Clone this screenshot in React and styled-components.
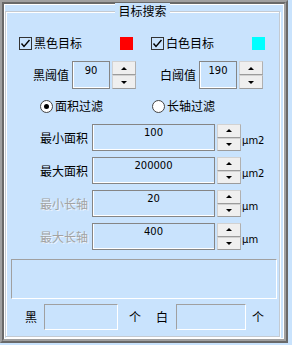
import React from 'react';
import styled, { createGlobalStyle } from 'styled-components';

const BG = '#c9e3fd';

const GlobalStyle = createGlobalStyle`
  body {
    margin: 0;
    background: ${BG};
    font-family: "Noto Sans CJK SC", "Noto Sans", sans-serif;
    font-size: 12px;
    color: #000;
  }
`;

const Frame = styled.div`
  box-sizing: border-box;
  width: 288px;
  height: 343px;
  border: 2px solid;
  border-color: #a0a0a0 #696969 #696969 #a0a0a0;
`;

const FrameInner = styled.div`
  box-sizing: border-box;
  height: 100%;
  display: flex;
  border: 2px solid;
  border-color: #696969 #a0a0a0 #a0a0a0 #696969;
  box-shadow: inset 1px 1px 0 #fff, inset -1px -1px 0 #fff;
  padding: 1px 4px 2px 1px;
`;

const Group = styled.fieldset`
  flex: 1;
  min-width: 0;
  margin: -2px 0 0 0;
  padding: 0;
  border: 1px solid #c4cad1;
  box-shadow: inset 1px 1px 0 #fff, 1px 1px 0 #fff;
  display: flex;
  flex-direction: column;
`;

const Title = styled.legend`
  margin: 0 auto;
  padding: 0 3px;
  font-size: 12px;
  line-height: 16px;
  background: ${BG};
`;

const PairRow = styled.div`
  display: grid;
  grid-template-columns: ${p => p.$col}px ${p => p.$col}px;
  column-gap: ${p => p.$gap}px;
  margin: ${p => p.$top}px 0 0 ${p => p.$left}px;
  height: 14px;
  align-items: center;
`;

const Option = styled.label`
  display: flex;
  align-items: center;
  gap: 2px;
  line-height: 14px;
  white-space: nowrap;
`;

const CheckBox = styled.span`
  box-sizing: border-box;
  width: 13px;
  height: 13px;
  border: 1px solid #333;
  display: flex;
  align-items: center;
  justify-content: center;
`;

const Radio = styled.span`
  box-sizing: border-box;
  width: 13px;
  height: 13px;
  border-radius: 50%;
  border: 1px solid #444;
  background: #fff;
  display: flex;
  align-items: center;
  justify-content: center;

  &::after {
    content: '';
    width: 5px;
    height: 5px;
    border-radius: 50%;
    background: ${p => (p.$on ? '#000' : 'transparent')};
  }
`;

const Swatch = styled.span`
  width: 13px;
  height: 13px;
  margin-left: auto;
  background: ${p => p.$color};
`;

const ThresholdRow = styled.div`
  display: flex;
  align-items: center;
  height: 28px;
  margin: 11px 0 0 27px;
`;

const FieldLabel = styled.span`
  line-height: 16px;
  white-space: nowrap;
  margin-left: ${p => p.$ml || 0}px;
  color: ${p => (p.$disabled ? '#a3a3a3' : '#000')};
  text-shadow: ${p => (p.$disabled ? '1px 1px 0 #eef5fd' : 'none')};
`;

const Value = styled.div`
  box-sizing: border-box;
  width: ${p => p.$w}px;
  height: 100%;
  margin-left: ${p => p.$ml}px;
  border: 1px solid #858585;
  box-shadow: inset 1px -1px 0 #fff;
  padding-top: ${p => p.$pt}px;
  font-family: "DejaVu Sans", sans-serif;
  font-size: 10px;
  line-height: 12px;
  text-align: center;
`;

const Spin = styled.div`
  display: flex;
  flex-direction: column;
  width: 24px;
  height: 100%;
  margin-left: 2px;
`;

const SpinButton = styled.div`
  box-sizing: border-box;
  flex: 1;
  display: flex;
  align-items: center;
  justify-content: center;
  background: #efefef;
  border: 1px solid;
  border-color: #d2d2d2 #b0b0b0 #9c9c9c #d2d2d2;

  &::after {
    content: '';
    border-left: 3px solid transparent;
    border-right: 3px solid transparent;
    ${p => (p.$down ? 'border-top' : 'border-bottom')}: 3px solid #000;
  }
`;

const RangeList = styled.div`
  display: flex;
  flex-direction: column;
  gap: 6px;
  margin: 11px 0 0 34px;
`;

const RangeRow = styled.div`
  display: flex;
  align-items: center;
  height: 27px;
`;

const Unit = styled.span`
  margin-left: 1px;
  padding-top: 6px;
  font-family: "DejaVu Sans", sans-serif;
  font-size: 10px;
  line-height: 12px;
`;

const Log = styled.div`
  box-sizing: border-box;
  width: 266px;
  height: 40px;
  margin: 9px 0 0 5px;
  border: 1px solid;
  border-color: #a0a0a0 #fff #fff #a0a0a0;
`;

const CountRow = styled.div`
  display: flex;
  align-items: center;
  height: 26px;
  margin: 5px 0 0 19px;
`;

const CountBox = styled.div`
  box-sizing: border-box;
  width: ${p => p.$w}px;
  height: 100%;
  margin-left: ${p => p.$ml}px;
  border: 1px solid;
  border-color: #a0a0a0 #fff #fff #a0a0a0;
`;

const Spinner = () => (
  <Spin>
    <SpinButton />
    <SpinButton $down />
  </Spin>
);

const Tick = () => (
  <CheckBox>
    <svg width="11" height="11" viewBox="0 0 11 11">
      <polyline points="1.5,5.5 4,8.5 9.5,2" fill="none" stroke="#000" strokeWidth="1.4" />
    </svg>
  </CheckBox>
);

const ranges = [
  { label: '最小面积', value: '100', unit: 'μm2' },
  { label: '最大面积', value: '200000', unit: 'μm2' },
  { label: '最小长轴', value: '20', unit: 'μm', disabled: true },
  { label: '最大长轴', value: '400', unit: 'μm', disabled: true },
];

const App = () => {
  return (
    <>
      <GlobalStyle />
      <Frame>
        <FrameInner>
          <Group>
            <Title>目标搜索</Title>

            <PairRow $col={114} $gap={18} $top={17} $left={13}>
              <Option>
                <Tick />
                黑色目标
                <Swatch $color="#ff0000" />
              </Option>
              <Option>
                <Tick />
                白色目标
                <Swatch $color="#00ffff" />
              </Option>
            </PairRow>

            <ThresholdRow>
              <FieldLabel>黑阈值</FieldLabel>
              <Value $w={38} $ml={3} $pt={3}>90</Value>
              <Spinner />
              <FieldLabel $ml={24}>白阈值</FieldLabel>
              <Value $w={38} $ml={3} $pt={3}>190</Value>
              <Spinner />
            </ThresholdRow>

            <PairRow $col={112} $gap={0} $top={10} $left={34}>
              <Option>
                <Radio $on />
                面积过滤
              </Option>
              <Option>
                <Radio />
                长轴过滤
              </Option>
            </PairRow>

            <RangeList>
              {ranges.map(r => (
                <RangeRow key={r.label}>
                  <FieldLabel $disabled={r.disabled}>{r.label}</FieldLabel>
                  <Value $w={123} $ml={4} $pt={2}>{r.value}</Value>
                  <Spinner />
                  <Unit>{r.unit}</Unit>
                </RangeRow>
              ))}
            </RangeList>

            <Log />

            <CountRow>
              <FieldLabel>黑</FieldLabel>
              <CountBox $w={74} $ml={7} />
              <FieldLabel $ml={11}>个</FieldLabel>
              <FieldLabel $ml={15}>白</FieldLabel>
              <CountBox $w={70} $ml={8} />
              <FieldLabel $ml={6}>个</FieldLabel>
            </CountRow>
          </Group>
        </FrameInner>
      </Frame>
    </>
  );
};

export default App;
